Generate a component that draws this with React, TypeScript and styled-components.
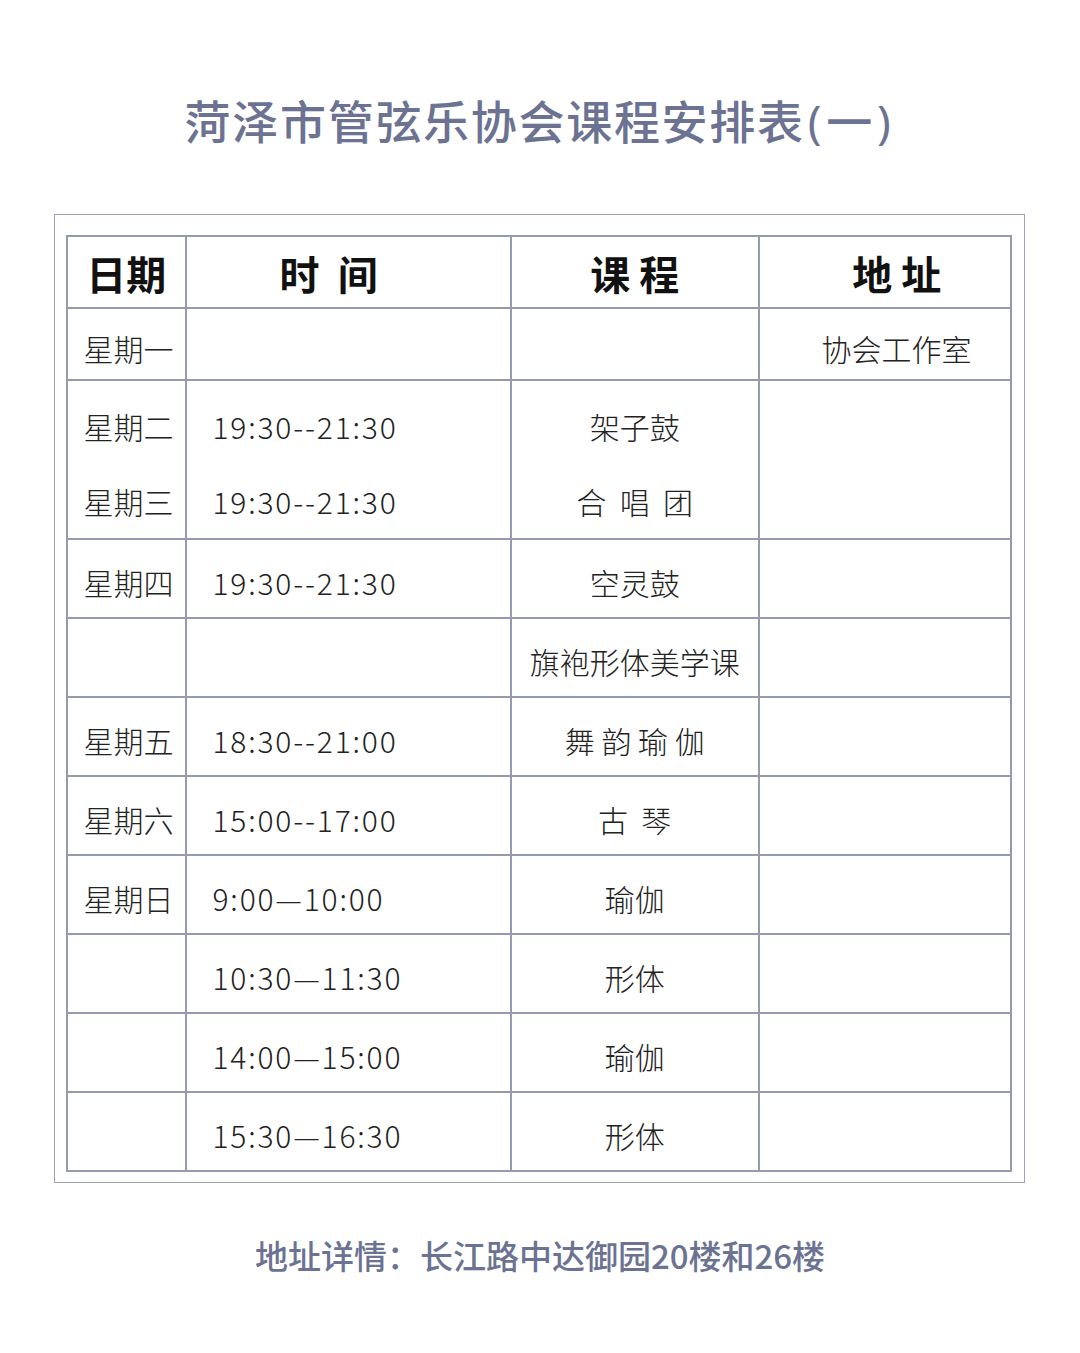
import styled, { createGlobalStyle } from "styled-components";

const GlobalStyle = createGlobalStyle`
  html, body {
    margin: 0;
    padding: 0;
    background: #ffffff;
  }
  body {
    font-family: "Noto Sans CJK SC", "Noto Sans", sans-serif;
  }
`;

const LINE = "#959ab0";

const Page = styled.div`
  width: 1080px;
  min-height: 1353px;
  box-sizing: border-box;
  padding-top: 89px;
  display: flex;
  flex-direction: column;
  align-items: center;
  background: #fff;
`;

const Title = styled.h1`
  margin: 0;
  font-size: 46px;
  line-height: 60px;
  font-weight: 500;
  color: #6c7392;
  letter-spacing: 1.7px;
  .paren {
    font-family: "Noto Sans", sans-serif;
    font-weight: 400;
    margin: 0 3px;
  }
`;

const Frame = styled.div`
  margin-top: 63px;
  margin-left: -1px;
  width: 971px;
  box-sizing: border-box;
  border: 1.5px solid #9ea1b6;
  padding: 20px 14px 10px 11px;
`;

const Table = styled.div`
  display: grid;
  grid-template-columns: 117.5px 323.5px 246.5px 250.5px;
  gap: 1.5px;
  padding: 1.5px;
  background: ${LINE};
  width: max-content;
`;

const Cell = styled.div<{ $h: number; $align?: "left" | "center"; $pad?: number }>`
  background: #fff;
  height: ${(p) => p.$h}px;
  box-sizing: border-box;
  display: flex;
  flex-direction: column;
  justify-content: space-around;
  align-items: ${(p) => (p.$align === "left" ? "flex-start" : "center")};
  padding-left: ${(p) => p.$pad ?? 0}px;
  padding-top: 8px;
`;

const HeadCell = styled(Cell)`
  padding-top: 2px;
  font-size: 40px;
  font-weight: 700;
  color: #111;
  white-space: pre;
`;

const Text = styled.span<{ $wide?: boolean }>`
  font-size: 30px;
  line-height: 40px;
  font-weight: 300;
  color: #222;
  white-space: pre;
  letter-spacing: ${(p) => (p.$wide ? "1.8px" : "0")};
`;

const Footer = styled.p`
  margin: 50px 0 0;
  font-size: 33px;
  line-height: 44px;
  font-weight: 500;
  color: #6c7392;
`;

type Row = { h: number; day: string[]; time: string[]; course: string[]; place: string[] };

const rows: Row[] = [
  { h: 70.5, day: ["星期一"], time: [], course: [], place: ["协会工作室"] },
  {
    h: 157.5,
    day: ["星期二", "星期三"],
    time: ["19:30--21:30", "19:30--21:30"],
    course: ["架子鼓", "合  唱  团"],
    place: [],
  },
  { h: 77.5, day: ["星期四"], time: ["19:30--21:30"], course: ["空灵鼓"], place: [] },
  { h: 77.5, day: [], time: [], course: ["旗袍形体美学课"], place: [] },
  { h: 77.5, day: ["星期五"], time: ["18:30--21:00"], course: ["舞 韵 瑜 伽"], place: [] },
  { h: 77.5, day: ["星期六"], time: ["15:00--17:00"], course: ["古  琴"], place: [] },
  { h: 77.5, day: ["星期日"], time: ["9:00—10:00"], course: ["瑜伽"], place: [] },
  { h: 77.5, day: [], time: ["10:30—11:30"], course: ["形体"], place: [] },
  { h: 77.5, day: [], time: ["14:00—15:00"], course: ["瑜伽"], place: [] },
  { h: 77.5, day: [], time: ["15:30—16:30"], course: ["形体"], place: [] },
];

const Lines = ({ items, wide }: { items: string[]; wide?: boolean }) => (
  <>
    {items.map((t, i) => (
      <Text key={i} $wide={wide}>
        {t}
      </Text>
    ))}
  </>
);

export default function App() {
  return (
    <>
      <GlobalStyle />
      <Page>
        <Title>
          菏泽市管弦乐协会课程安排表<span className="paren">(</span>一<span className="paren">)</span>
        </Title>
        <Frame>
          <Table>
            <HeadCell $h={70.5}>日期</HeadCell>
            <HeadCell $h={70.5} $align="left" $pad={93}>
              {"时  间"}
            </HeadCell>
            <HeadCell $h={70.5}>课 程</HeadCell>
            <HeadCell $h={70.5} $pad={24}>
              地 址
            </HeadCell>
            {rows.map((r, i) => (
              <>
                <Cell key={`d${i}`} $h={r.h} $align="left" $pad={16}>
                  <Lines items={r.day} />
                </Cell>
                <Cell key={`t${i}`} $h={r.h} $align="left" $pad={26}>
                  <Lines items={r.time} wide />
                </Cell>
                <Cell key={`c${i}`} $h={r.h}>
                  <Lines items={r.course} />
                </Cell>
                <Cell key={`p${i}`} $h={r.h} $align="left" $pad={62}>
                  <Lines items={r.place} />
                </Cell>
              </>
            ))}
          </Table>
        </Frame>
        <Footer>地址详情：长江路中达御园20楼和26楼</Footer>
      </Page>
    </>
  );
}
